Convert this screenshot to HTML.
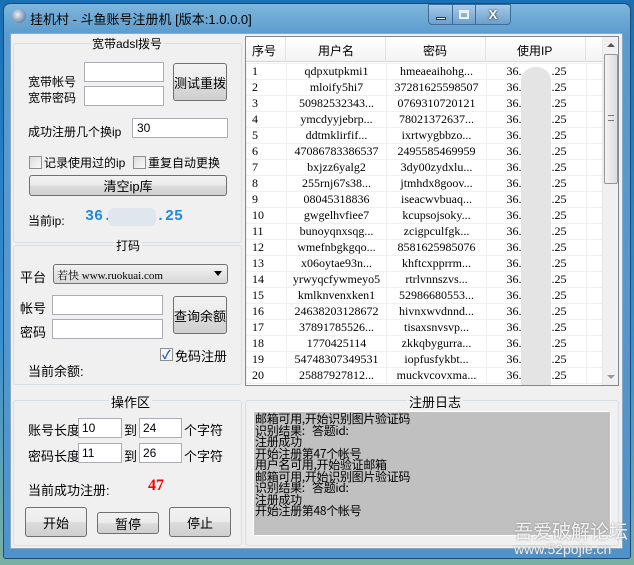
<!DOCTYPE html>
<html><head><meta charset="utf-8"><style>
*{box-sizing:border-box;margin:0;padding:0}
body{width:634px;height:565px;overflow:hidden;background:linear-gradient(180deg,#1a6fb5 0%,#3a8fd0 60%,#7ab0a0 100%);font-family:"Liberation Sans","Noto Sans CJK SC","WenQuanYi Zen Hei",sans-serif;font-size:12px;color:#000;position:relative}
.a{position:absolute}
.win{left:3px;top:3px;width:628px;height:556px;border-radius:7px 7px 3px 3px;background:linear-gradient(180deg,#7fb6dc 0,#5b9ccf 30px,#4f93cb 100%);border:1px solid #1d4a78}
.client{left:10px;top:33px;width:613px;height:516px;background:#f0f0f0;border:1px solid #8aa9c4}
.title{left:30px;top:9px;font-size:13px;color:#000}
.gb{border:1px solid #d5dfe5;border-radius:3px}
.gt{background:#f0f0f0;padding:0 2px;font-size:12px}
.in{background:#fff;border:1px solid #abadb3}
.btn{border:1px solid #707070;border-radius:3px;background:linear-gradient(#f2f2f2 0,#ebebeb 50%,#dddddd 50%,#cfcfcf 100%);display:flex;align-items:center;justify-content:center;font-size:13px}
.cb{width:13px;height:13px;border:1px solid #8f8f8f;background:linear-gradient(135deg,#dcdcdc,#fafafa)}
table{border-collapse:collapse;font-family:"Liberation Serif","Noto Serif CJK SC",serif;font-size:12px}
td{height:16px;border:1px solid #f0f0f0;text-align:center;white-space:nowrap;overflow:hidden;padding:0}
.log{font-family:"WenQuanYi Zen Hei","Noto Sans CJK SC",sans-serif;font-size:12px;line-height:11.5px;letter-spacing:-0.3px}
</style></head><body>
<div class="a win"></div>
<div class="a" style="left:12px;top:9px;width:14px;height:14px;border-radius:50%;background:radial-gradient(circle at 40% 40%,#e8f0f8,#6f8aa4 70%,#3b5670)"></div>
<div class="a title">挂机村 - 斗鱼账号注册机 [版本:1.0.0.0]</div>
<div class="a" style="left:428px;top:4px;width:25px;height:21px;border:1px solid #3c6d9a;border-radius:0 0 0 4px;background:linear-gradient(#a8cbe8,#6b9fcc)"><div class="a" style="left:7px;top:12px;width:10px;height:3px;background:#fff;border:1px solid #333"></div></div>
<div class="a" style="left:452px;top:4px;width:24px;height:21px;border:1px solid #3c6d9a;background:linear-gradient(#a8cbe8,#6b9fcc)"><div class="a" style="left:6px;top:5px;width:10px;height:9px;border:2px solid #e8f0f8;border-top-width:3px"></div></div>
<div class="a" style="left:475px;top:4px;width:36px;height:21px;border:1px solid #3c6d9a;border-radius:0 0 4px 0;background:linear-gradient(#a8cbe8,#6b9fcc);color:#fff;font-weight:bold;font-size:13px;text-align:center;line-height:19px;text-shadow:0 0 2px #000">X</div>
<div class="a client"></div>

<!-- group 1 -->
<div class="a gb" style="left:13px;top:43px;width:229px;height:200px"></div>
<div class="a gt" style="left:90px;top:35px">宽带adsl拨号</div>
<div class="a" style="left:28px;top:73px">宽带帐号</div>
<div class="a" style="left:28px;top:89px">宽带密码</div>
<div class="a in" style="left:84px;top:62px;width:80px;height:20px"></div>
<div class="a in" style="left:84px;top:86px;width:80px;height:20px"></div>
<div class="a btn" style="left:173px;top:63px;width:54px;height:38px">测试重拨</div>
<div class="a" style="left:28px;top:123px">成功注册几个换ip</div>
<div class="a in" style="left:132px;top:118px;width:96px;height:20px;padding:2px 4px">30</div>
<div class="a cb" style="left:29px;top:156px"></div>
<div class="a" style="left:44px;top:154px">记录使用过的ip</div>
<div class="a cb" style="left:133px;top:156px"></div>
<div class="a" style="left:148px;top:154px">重复自动更换</div>
<div class="a btn" style="left:29px;top:175px;width:198px;height:21px">清空ip库</div>
<div class="a" style="left:28px;top:212px">当前ip:</div>
<div class="a" style="left:85px;top:208px;font-family:'Liberation Mono',monospace;font-size:15px;font-weight:bold;color:#1a8ae6">36.</div>
<div class="a" style="left:108px;top:208px;width:48px;height:18px;background:#dfe6ee;border-radius:6px"></div>
<div class="a" style="left:156px;top:208px;font-family:'Liberation Mono',monospace;font-size:15px;font-weight:bold;color:#1a8ae6">.25</div>

<!-- group 2 -->
<div class="a gb" style="left:13px;top:245px;width:229px;height:140px"></div>
<div class="a gt" style="left:114px;top:237px">打码</div>
<div class="a" style="left:20px;top:267px;font-size:13px">平台</div>
<div class="a" style="left:53px;top:264px;width:175px;height:20px;border:1px solid #707070;border-radius:3px;background:linear-gradient(#f2f2f2,#d8d8d8);padding:2px 3px;font-family:'Liberation Serif','Noto Serif CJK SC',serif;font-size:11px">若快 www.ruokuai.com</div>
<div class="a" style="left:214px;top:271px;width:0;height:0;border-left:4px solid transparent;border-right:4px solid transparent;border-top:5px solid #000"></div>
<div class="a" style="left:20px;top:298px;font-size:13px">帐号</div>
<div class="a" style="left:20px;top:322px;font-size:13px">密码</div>
<div class="a in" style="left:52px;top:295px;width:111px;height:20px"></div>
<div class="a in" style="left:52px;top:319px;width:111px;height:20px"></div>
<div class="a btn" style="left:173px;top:296px;width:54px;height:38px">查询余额</div>
<div class="a cb" style="left:160px;top:348px;background:#f4f4f4"><span class="a" style="left:1px;top:-3px;color:#2a5fb0;font-size:12px;font-weight:bold">✓</span></div>
<div class="a" style="left:175px;top:346px;font-size:13px">免码注册</div>
<div class="a" style="left:28px;top:361px;font-size:13px">当前余额:</div>

<!-- group 3 -->
<div class="a gb" style="left:13px;top:400px;width:229px;height:146px"></div>
<div class="a gt" style="left:109px;top:392px;font-size:13px">操作区</div>
<div class="a" style="left:28px;top:420px;font-size:13px">账号长度</div>
<div class="a in" style="left:78px;top:418px;width:44px;height:20px;padding:2px 3px">10</div>
<div class="a" style="left:124px;top:420px;font-size:13px">到</div>
<div class="a in" style="left:139px;top:418px;width:43px;height:20px;padding:2px 3px">24</div>
<div class="a" style="left:184px;top:420px;font-size:13px">个字符</div>
<div class="a" style="left:28px;top:446px;font-size:13px">密码长度</div>
<div class="a in" style="left:78px;top:443px;width:44px;height:20px;padding:2px 3px">11</div>
<div class="a" style="left:124px;top:446px;font-size:13px">到</div>
<div class="a in" style="left:139px;top:443px;width:43px;height:20px;padding:2px 3px">26</div>
<div class="a" style="left:184px;top:446px;font-size:13px">个字符</div>
<div class="a" style="left:28px;top:480px;font-size:13px">当前成功注册:</div>
<div class="a" style="left:148px;top:477px;font-family:'Liberation Serif',serif;font-size:16px;font-weight:bold;color:#f00">47</div>
<div class="a btn" style="left:25px;top:507px;width:62px;height:30px">开始</div>
<div class="a btn" style="left:97px;top:512px;width:62px;height:22px">暂停</div>
<div class="a btn" style="left:169px;top:507px;width:62px;height:30px">停止</div>

<!-- table -->
<div class="a" style="left:245px;top:36px;width:374px;height:350px;background:#fff;border:1px solid #828790;overflow:hidden">
<div class="a" style="left:0;top:0;width:356px;height:25px;background:linear-gradient(#fff,#f3f3f3);border-bottom:1px solid #d5d5d5;font-size:12px">
<div class="a" style="left:6px;top:5px">序号</div><div class="a" style="left:39px;top:0;width:1px;height:25px;background:#e3e3e3"></div>
<div class="a" style="left:72px;top:5px">用户名</div><div class="a" style="left:139px;top:0;width:1px;height:25px;background:#e3e3e3"></div>
<div class="a" style="left:177px;top:5px">密码</div><div class="a" style="left:239px;top:0;width:1px;height:25px;background:#e3e3e3"></div>
<div class="a" style="left:271px;top:5px">使用IP</div><div class="a" style="left:339px;top:0;width:1px;height:25px;background:#e3e3e3"></div>
</div>
<table class="a" style="left:0;top:26px;width:356px;table-layout:fixed">
<colgroup><col style="width:40px"><col style="width:100px"><col style="width:100px"><col style="width:100px"><col style="width:16px"></colgroup>
<tr><td style="text-align:left;padding-left:5px">1</td><td>qdpxutpkmi1</td><td>hmeaeaihohg...</td><td>36.&nbsp;&nbsp;&nbsp;&nbsp;&nbsp;&nbsp;&nbsp;&nbsp;&nbsp;&nbsp;.25</td><td></td></tr>
<tr><td style="text-align:left;padding-left:5px">2</td><td>mloify5hi7</td><td>37281625598507</td><td>36.&nbsp;&nbsp;&nbsp;&nbsp;&nbsp;&nbsp;&nbsp;&nbsp;&nbsp;&nbsp;.25</td><td></td></tr>
<tr><td style="text-align:left;padding-left:5px">3</td><td>50982532343...</td><td>0769310720121</td><td>36.&nbsp;&nbsp;&nbsp;&nbsp;&nbsp;&nbsp;&nbsp;&nbsp;&nbsp;&nbsp;.25</td><td></td></tr>
<tr><td style="text-align:left;padding-left:5px">4</td><td>ymcdyyjebrp...</td><td>78021372637...</td><td>36.&nbsp;&nbsp;&nbsp;&nbsp;&nbsp;&nbsp;&nbsp;&nbsp;&nbsp;&nbsp;.25</td><td></td></tr>
<tr><td style="text-align:left;padding-left:5px">5</td><td>ddtmklirfif...</td><td>ixrtwygbbzo...</td><td>36.&nbsp;&nbsp;&nbsp;&nbsp;&nbsp;&nbsp;&nbsp;&nbsp;&nbsp;&nbsp;.25</td><td></td></tr>
<tr><td style="text-align:left;padding-left:5px">6</td><td>47086783386537</td><td>2495585469959</td><td>36.&nbsp;&nbsp;&nbsp;&nbsp;&nbsp;&nbsp;&nbsp;&nbsp;&nbsp;&nbsp;.25</td><td></td></tr>
<tr><td style="text-align:left;padding-left:5px">7</td><td>bxjzz6yalg2</td><td>3dy00zydxlu...</td><td>36.&nbsp;&nbsp;&nbsp;&nbsp;&nbsp;&nbsp;&nbsp;&nbsp;&nbsp;&nbsp;.25</td><td></td></tr>
<tr><td style="text-align:left;padding-left:5px">8</td><td>255rnj67s38...</td><td>jtmhdx8goov...</td><td>36.&nbsp;&nbsp;&nbsp;&nbsp;&nbsp;&nbsp;&nbsp;&nbsp;&nbsp;&nbsp;.25</td><td></td></tr>
<tr><td style="text-align:left;padding-left:5px">9</td><td>08045318836</td><td>iseacwvbuaq...</td><td>36.&nbsp;&nbsp;&nbsp;&nbsp;&nbsp;&nbsp;&nbsp;&nbsp;&nbsp;&nbsp;.25</td><td></td></tr>
<tr><td style="text-align:left;padding-left:5px">10</td><td>gwgelhvfiee7</td><td>kcupsojsoky...</td><td>36.&nbsp;&nbsp;&nbsp;&nbsp;&nbsp;&nbsp;&nbsp;&nbsp;&nbsp;&nbsp;.25</td><td></td></tr>
<tr><td style="text-align:left;padding-left:5px">11</td><td>bunoyqnxsqg...</td><td>zcigpculfgk...</td><td>36.&nbsp;&nbsp;&nbsp;&nbsp;&nbsp;&nbsp;&nbsp;&nbsp;&nbsp;&nbsp;.25</td><td></td></tr>
<tr><td style="text-align:left;padding-left:5px">12</td><td>wmefnbgkgqo...</td><td>8581625985076</td><td>36.&nbsp;&nbsp;&nbsp;&nbsp;&nbsp;&nbsp;&nbsp;&nbsp;&nbsp;&nbsp;.25</td><td></td></tr>
<tr><td style="text-align:left;padding-left:5px">13</td><td>x06oytae93n...</td><td>khftcxpprrm...</td><td>36.&nbsp;&nbsp;&nbsp;&nbsp;&nbsp;&nbsp;&nbsp;&nbsp;&nbsp;&nbsp;.25</td><td></td></tr>
<tr><td style="text-align:left;padding-left:5px">14</td><td>yrwyqcfywmeyo5</td><td>rtrlvnnszvs...</td><td>36.&nbsp;&nbsp;&nbsp;&nbsp;&nbsp;&nbsp;&nbsp;&nbsp;&nbsp;&nbsp;.25</td><td></td></tr>
<tr><td style="text-align:left;padding-left:5px">15</td><td>kmlknvenxken1</td><td>52986680553...</td><td>36.&nbsp;&nbsp;&nbsp;&nbsp;&nbsp;&nbsp;&nbsp;&nbsp;&nbsp;&nbsp;.25</td><td></td></tr>
<tr><td style="text-align:left;padding-left:5px">16</td><td>24638203128672</td><td>hivnxwvdnnd...</td><td>36.&nbsp;&nbsp;&nbsp;&nbsp;&nbsp;&nbsp;&nbsp;&nbsp;&nbsp;&nbsp;.25</td><td></td></tr>
<tr><td style="text-align:left;padding-left:5px">17</td><td>37891785526...</td><td>tisaxsnvsvp...</td><td>36.&nbsp;&nbsp;&nbsp;&nbsp;&nbsp;&nbsp;&nbsp;&nbsp;&nbsp;&nbsp;.25</td><td></td></tr>
<tr><td style="text-align:left;padding-left:5px">18</td><td>1770425114</td><td>zkkqbygurra...</td><td>36.&nbsp;&nbsp;&nbsp;&nbsp;&nbsp;&nbsp;&nbsp;&nbsp;&nbsp;&nbsp;.25</td><td></td></tr>
<tr><td style="text-align:left;padding-left:5px">19</td><td>54748307349531</td><td>iopfusfykbt...</td><td>36.&nbsp;&nbsp;&nbsp;&nbsp;&nbsp;&nbsp;&nbsp;&nbsp;&nbsp;&nbsp;.25</td><td></td></tr>
<tr><td style="text-align:left;padding-left:5px">20</td><td>25887927812...</td><td>muckvcovxma...</td><td>36.&nbsp;&nbsp;&nbsp;&nbsp;&nbsp;&nbsp;&nbsp;&nbsp;&nbsp;&nbsp;.25</td><td></td></tr>
</table>
<div class="a" style="left:275px;top:30px;width:30px;height:330px;background:#e4e4e4;border-radius:14px"></div>
<div class="a" style="left:356px;top:0;width:17px;height:348px;background:#f0f0f0;border-left:1px solid #e8e8e8">
<div class="a" style="left:4px;top:6px;border-left:4px solid transparent;border-right:4px solid transparent;border-bottom:4px solid #555"></div>
<div class="a" style="left:1px;top:17px;width:14px;height:130px;border:1px solid #979797;border-radius:2px;background:linear-gradient(90deg,#f4f4f4,#dcdcdc)"></div>
<div class="a" style="left:5px;top:78px;width:6px;height:6px;border-top:1px solid #777;border-bottom:1px solid #777"></div>
<div class="a" style="left:4px;top:338px;border-left:4px solid transparent;border-right:4px solid transparent;border-top:4px solid #999"></div>
</div>
</div>

<!-- log -->
<div class="a gb" style="left:245px;top:400px;width:374px;height:146px"></div>
<div class="a gt" style="left:407px;top:392px;font-size:13px">注册日志</div>
<div class="a log" style="left:253px;top:411px;width:358px;height:125px;background:#c0c0c0;border:1px solid #fff;padding:1px 1px">邮箱可用,开始识别图片验证码<br>识别结果:&nbsp;&nbsp;&nbsp;答题id:<br>注册成功<br>开始注册第47个帐号<br>用户名可用,开始验证邮箱<br>邮箱可用,开始识别图片验证码<br>识别结果:&nbsp;&nbsp;&nbsp;答题id:<br>注册成功<br>开始注册第48个帐号</div>
<div class="a" style="left:514px;top:517px;font-size:19px;color:rgba(255,255,255,0.85);text-shadow:0 0 2px #888">吾爱破解论坛</div>
<div class="a" style="left:514px;top:541px;font-size:14px;color:rgba(255,255,255,0.85);text-shadow:0 0 2px #888">www.52pojie.cn</div>
</body></html>
